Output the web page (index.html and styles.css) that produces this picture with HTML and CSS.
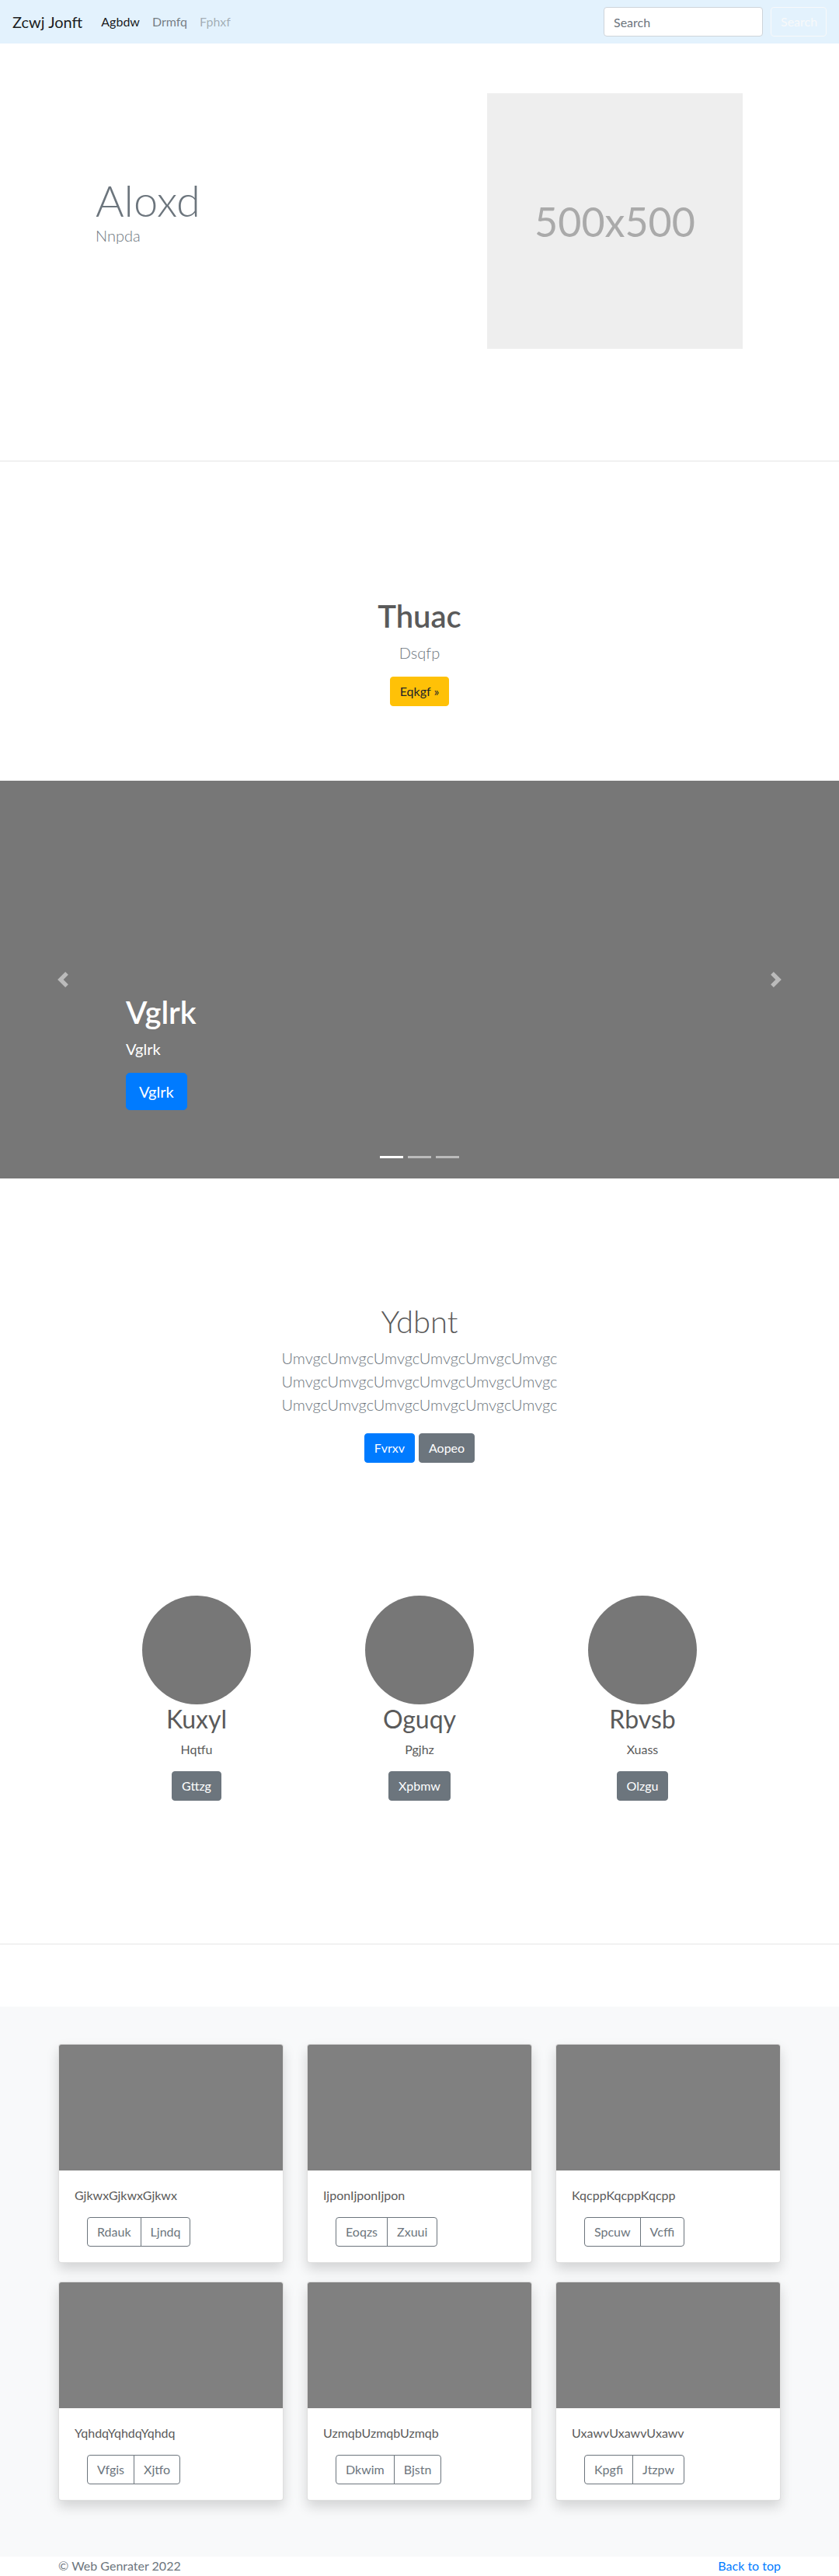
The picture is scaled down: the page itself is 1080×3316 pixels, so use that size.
FILE: index.html
```html
<!DOCTYPE html>
<html lang="en">
<head>
<meta charset="utf-8">
<title>Zcwj Jonft</title>
<link rel="stylesheet" href="styles.css">
</head>
<body>
<nav class="navbar">
  <a class="brand" href="#">Zcwj Jonft</a>
  <ul class="nav-links">
    <li><a class="nav-link active" href="#">Agbdw</a></li>
    <li><a class="nav-link" href="#">Drmfq</a></li>
    <li><a class="nav-link disabled" href="#">Fphxf</a></li>
  </ul>
  <form class="nav-search">
    <input class="search-input" type="search" placeholder="Search">
    <button class="search-btn" type="button">Search</button>
  </form>
</nav>

<section class="hero">
  <div class="container hero-row">
    <div class="hero-text">
      <h1 class="display">Aloxd</h1>
      <p class="lead muted">Nnpda</p>
    </div>
    <div class="hero-media">500x500</div>
  </div>
</section>

<hr class="divider">

<section class="feature">
  <h1 class="feature-title">Thuac</h1>
  <p class="lead muted">Dsqfp</p>
  <a class="btn btn-warning" href="#">Eqkgf &raquo;</a>
</section>

<div class="carousel">
  <div class="carousel-caption">
    <h1>Vglrk</h1>
    <p class="caption-text">Vglrk</p>
    <p class="caption-action"><a class="btn btn-lg btn-primary" href="#">Vglrk</a></p>
  </div>
  <a class="carousel-control prev" href="#">
    <svg viewBox="0 0 8 8" width="20" height="20"><path fill="#fff" d="M5.25 0l-4 4 4 4 1.5-1.5L4.25 4l2.5-2.5L5.25 0z"/></svg>
  </a>
  <a class="carousel-control next" href="#">
    <svg viewBox="0 0 8 8" width="20" height="20"><path fill="#fff" d="M2.75 0l-1.5 1.5L3.75 4l-2.5 2.5L2.75 8l4-4-4-4z"/></svg>
  </a>
  <ol class="indicators">
    <li class="active"></li>
    <li></li>
    <li></li>
  </ol>
</div>

<section class="jumbo">
  <h1 class="jumbo-title">Ydbnt</h1>
  <p class="lead muted jumbo-lead">UmvgcUmvgcUmvgcUmvgcUmvgcUmvgc<br>UmvgcUmvgcUmvgcUmvgcUmvgcUmvgc<br>UmvgcUmvgcUmvgcUmvgcUmvgcUmvgc</p>
  <div class="jumbo-actions">
    <a class="btn btn-primary" href="#">Fvrxv</a>
    <a class="btn btn-secondary" href="#">Aopeo</a>
  </div>
</section>

<section class="marketing">
  <div class="marketing-row">
    <div class="member">
      <div class="avatar"></div>
      <h2>Kuxyl</h2>
      <p>Hqtfu</p>
      <p><a class="btn btn-secondary" href="#">Gttzg</a></p>
    </div>
    <div class="member">
      <div class="avatar"></div>
      <h2>Oguqy</h2>
      <p>Pgjhz</p>
      <p><a class="btn btn-secondary" href="#">Xpbmw</a></p>
    </div>
    <div class="member">
      <div class="avatar"></div>
      <h2>Rbvsb</h2>
      <p>Xuass</p>
      <p><a class="btn btn-secondary" href="#">Olzgu</a></p>
    </div>
  </div>
</section>

<hr class="divider">

<section class="album">
  <div class="container card-grid">
    <div class="card">
      <div class="card-img"></div>
      <div class="card-body">
        <p class="card-text">GjkwxGjkwxGjkwx</p>
        <div class="btn-group"><button type="button">Rdauk</button><button type="button">Ljndq</button></div>
      </div>
    </div>
    <div class="card">
      <div class="card-img"></div>
      <div class="card-body">
        <p class="card-text">IjponIjponIjpon</p>
        <div class="btn-group"><button type="button">Eoqzs</button><button type="button">Zxuui</button></div>
      </div>
    </div>
    <div class="card">
      <div class="card-img"></div>
      <div class="card-body">
        <p class="card-text">KqcppKqcppKqcpp</p>
        <div class="btn-group"><button type="button">Spcuw</button><button type="button">Vcffi</button></div>
      </div>
    </div>
    <div class="card">
      <div class="card-img"></div>
      <div class="card-body">
        <p class="card-text">YqhdqYqhdqYqhdq</p>
        <div class="btn-group"><button type="button">Vfgis</button><button type="button">Xjtfo</button></div>
      </div>
    </div>
    <div class="card">
      <div class="card-img"></div>
      <div class="card-body">
        <p class="card-text">UzmqbUzmqbUzmqb</p>
        <div class="btn-group"><button type="button">Dkwim</button><button type="button">Bjstn</button></div>
      </div>
    </div>
    <div class="card">
      <div class="card-img"></div>
      <div class="card-body">
        <p class="card-text">UxawvUxawvUxawv</p>
        <div class="btn-group"><button type="button">Kpgfi</button><button type="button">Jtzpw</button></div>
      </div>
    </div>
  </div>
</section>

<footer class="footer">
  <div class="container footer-row">
    <p class="copy">&copy; Web Genrater 2022</p>
    <a class="back-top" href="#">Back to top</a>
  </div>
</footer>
</body>
</html>
```

FILE: styles.css
```css
* { box-sizing: border-box; }

html, body {
  margin: 0;
  padding: 0;
}

body {
  font-family: Lato, "Open Sans", "Liberation Sans", sans-serif;
  font-size: 16px;
  line-height: 1.5;
  color: #5a5a5a;
  background: #fff;
}

a { text-decoration: none; }

h1, h2, p { margin: 0; }

.container {
  width: 960px;
  margin: 0 auto;
  padding: 0 15px;
}

.muted { color: #6c757d; }

.lead {
  font-size: 20px;
  font-weight: 300;
  line-height: 30px;
}

/* ---------- navbar ---------- */
.navbar {
  height: 56px;
  background: #e3f2fd;
  display: flex;
  align-items: center;
  padding: 0 16px;
}

.brand {
  font-size: 20px;
  line-height: 30px;
  color: rgba(0, 0, 0, 0.9);
  margin-right: 16px;
}

.nav-links {
  list-style: none;
  margin: 0;
  padding: 0;
  display: flex;
}

.nav-link {
  display: block;
  padding: 8px;
  color: rgba(0, 0, 0, 0.5);
}

.nav-link.active { color: rgba(0, 0, 0, 0.9); }
.nav-link.disabled { color: rgba(0, 0, 0, 0.3); }

.nav-search {
  margin-left: auto;
  display: flex;
  gap: 10px;
}

.search-input {
  width: 205px;
  height: 38px;
  padding: 6px 12px;
  border: 1px solid #ced4da;
  border-radius: 4px;
  font: inherit;
  color: #495057;
  background: #fff;
}

.search-input::placeholder { color: #6c757d; }

.search-btn {
  width: 72px;
  height: 38px;
  border: 1px solid #f8f9fa;
  border-radius: 4px;
  background: transparent;
  color: #f8f9fa;
  font: inherit;
  padding: 6px 12px;
}

/* ---------- hero ---------- */
.hero { padding: 64px 0; }

.hero-row {
  display: flex;
  align-items: flex-start;
}

.hero-text {
  flex: 1;
  padding: 104px 0 0 48px;
}

.display {
  font-size: 56px;
  font-weight: 300;
  line-height: 1.2;
  color: #6c757d;
}

.hero-text .lead { margin-top: -3px; }

.hero-media {
  width: 329px;
  height: 329px;
  margin-right: 49px;
  background: #eeeeee;
  color: #aaaaaa;
  font-size: 52px;
  display: flex;
  align-items: center;
  justify-content: center;
}

.divider {
  margin: 80px 0;
  border: 0;
  border-top: 1px solid rgba(0, 0, 0, 0.1);
  height: 0;
}

/* ---------- buttons ---------- */
.btn {
  display: inline-block;
  padding: 6px 12px;
  font-size: 16px;
  line-height: 24px;
  border: 1px solid transparent;
  border-radius: 4px;
}

.btn-warning { background: #ffc107; border-color: #ffc107; color: #212529; }
.btn-primary { background: #007bff; border-color: #007bff; color: #fff; }
.btn-secondary { background: #6c757d; border-color: #6c757d; color: #fff; }

.btn-lg {
  padding: 8px 16px;
  font-size: 20px;
  line-height: 30px;
  border-radius: 5px;
}

/* ---------- feature ---------- */
.feature {
  text-align: center;
  padding: 95px 0 96px;
}

.feature-title {
  font-size: 40px;
  font-weight: 600;
  line-height: 1.2;
  margin-bottom: 8px;
}

.feature .lead { margin-bottom: 16px; }

/* ---------- carousel ---------- */
.carousel {
  position: relative;
  height: 512px;
  background: #777777;
}

.carousel-caption {
  position: absolute;
  left: 15%;
  right: 15%;
  bottom: 52px;
  padding: 20px 0;
  color: #fff;
  z-index: 10;
}

.carousel-caption h1 {
  font-size: 40px;
  font-weight: 600;
  line-height: 1.2;
  margin-bottom: 8px;
}

.caption-text {
  font-size: 20px;
  line-height: 30px;
  margin-bottom: 16px;
}

.caption-action { margin-bottom: 16px; }

.carousel-control {
  position: absolute;
  top: 0;
  bottom: 0;
  width: 15%;
  display: flex;
  align-items: center;
  justify-content: center;
  opacity: 0.5;
}

.carousel-control.prev { left: 0; }
.carousel-control.next { right: 0; }

.indicators {
  position: absolute;
  left: 0;
  right: 0;
  bottom: 0;
  margin: 0 0 16px;
  padding: 0;
  list-style: none;
  display: flex;
  justify-content: center;
}

.indicators li {
  width: 30px;
  height: 3px;
  margin: 0 3px;
  border-top: 10px solid transparent;
  border-bottom: 10px solid transparent;
  background: #fff;
  background-clip: padding-box;
  opacity: 0.5;
  box-sizing: content-box;
}

.indicators li.active { opacity: 1; }

/* ---------- jumbotron ---------- */
.jumbo {
  text-align: center;
  padding: 160px 0 0;
}

.jumbo-title {
  font-size: 40px;
  font-weight: 300;
  line-height: 1.2;
  margin-bottom: 8px;
}

.jumbo-lead { margin-bottom: 22px; }

.jumbo-actions {
  display: flex;
  justify-content: center;
  gap: 5px;
}

/* ---------- marketing ---------- */
.marketing { padding: 171px 0 104px; }

.marketing-row {
  width: 861px;
  margin: 0 auto;
  display: grid;
  grid-template-columns: repeat(3, 1fr);
  text-align: center;
}

.avatar {
  width: 140px;
  height: 140px;
  border-radius: 50%;
  background: #777777;
  margin: 0 auto;
}

.member h2 {
  font-size: 32px;
  font-weight: 400;
  line-height: 1.2;
  margin-bottom: 8px;
}

.member p { margin-bottom: 16px; }
.member p:last-child { margin-bottom: 0; }

/* ---------- album ---------- */
.album {
  background: #f8f9fa;
  padding: 48px 0;
}

.card-grid {
  display: grid;
  grid-template-columns: repeat(3, 290px);
  column-gap: 30px;
  row-gap: 24px;
  padding-bottom: 24px;
}

.card {
  background: #fff;
  border: 1px solid rgba(0, 0, 0, 0.125);
  border-radius: 4px;
  overflow: hidden;
  box-shadow: 0 8px 16px rgba(0, 0, 0, 0.15);
}

.card-img {
  height: 162px;
  background: #808080;
}

.card-body { padding: 20px; }

.card-text {
  margin-bottom: 16px;
  color: #5a5a5a;
}

.btn-group {
  display: inline-flex;
  margin-left: 16px;
}

.btn-group button {
  font: inherit;
  line-height: 24px;
  padding: 6px 12px;
  background: transparent;
  color: #6c757d;
  border: 1px solid #6c757d;
  border-radius: 0;
}

.btn-group button:first-child {
  border-radius: 4px 0 0 4px;
}

.btn-group button:last-child {
  border-radius: 0 4px 4px 0;
  margin-left: -1px;
}

/* ---------- footer ---------- */
.footer {
  color: #6c757d;
  background: #fff;
}

.footer-row {
  display: flex;
  justify-content: space-between;
}

.back-top { color: #007bff; }
```
